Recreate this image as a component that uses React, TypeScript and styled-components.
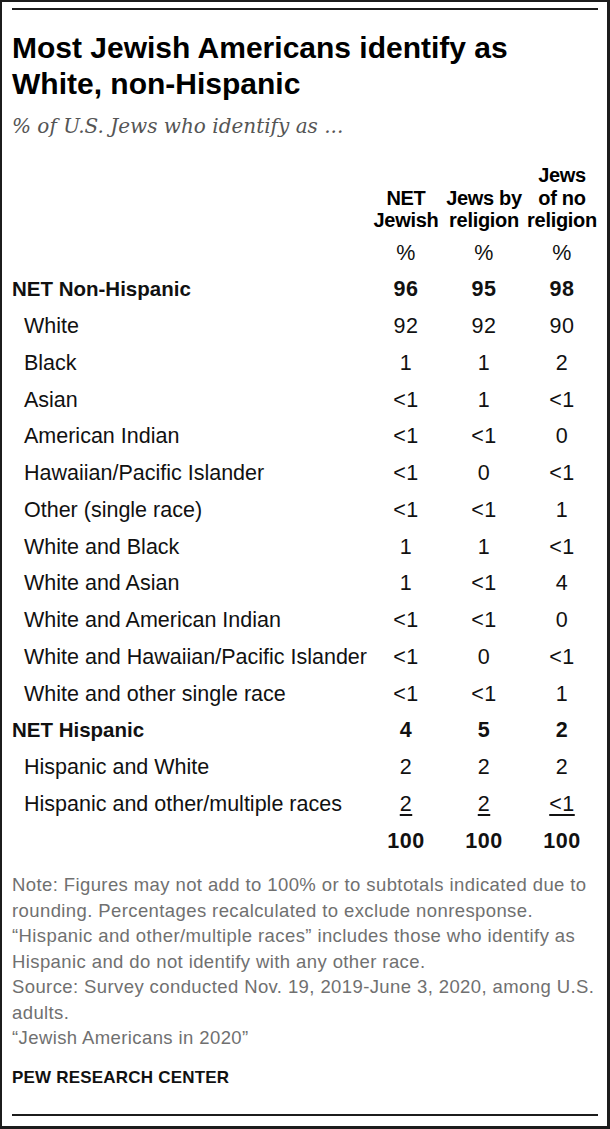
import React from "react";
import styled, { createGlobalStyle } from "styled-components";

type Row = {
  label: string;
  values: string[];
  bold?: boolean;
  underline?: boolean;
};

const rows: Row[] = [
  { label: "NET Non-Hispanic", values: ["96", "95", "98"], bold: true },
  { label: "White", values: ["92", "92", "90"] },
  { label: "Black", values: ["1", "1", "2"] },
  { label: "Asian", values: ["<1", "1", "<1"] },
  { label: "American Indian", values: ["<1", "<1", "0"] },
  { label: "Hawaiian/Pacific Islander", values: ["<1", "0", "<1"] },
  { label: "Other (single race)", values: ["<1", "<1", "1"] },
  { label: "White and Black", values: ["1", "1", "<1"] },
  { label: "White and Asian", values: ["1", "<1", "4"] },
  { label: "White and American Indian", values: ["<1", "<1", "0"] },
  { label: "White and Hawaiian/Pacific Islander", values: ["<1", "0", "<1"] },
  { label: "White and other single race", values: ["<1", "<1", "1"] },
  { label: "NET Hispanic", values: ["4", "5", "2"], bold: true },
  { label: "Hispanic and White", values: ["2", "2", "2"] },
  { label: "Hispanic and other/multiple races", values: ["2", "2", "<1"], underline: true },
  { label: "", values: ["100", "100", "100"], bold: true },
];

const headers = [
  ["NET", "Jewish"],
  ["Jews by", "religion"],
  ["Jews", "of no", "religion"],
];

// note lines break where the published chart breaks them
const notes = [
  "Note: Figures may not add to 100% or to subtotals indicated due to",
  "rounding. Percentages recalculated to exclude nonresponse.",
  "“Hispanic and other/multiple races” includes those who identify as",
  "Hispanic and do not identify with any other race.",
  "Source: Survey conducted Nov. 19, 2019-June 3, 2020, among U.S.",
  "adults.",
  "“Jewish Americans in 2020”",
];

const App = () => {
  return (
    <>
      <GlobalStyle />
      <Frame>
        <Rule />
        <Title>
          Most Jewish Americans identify as
          <br />
          White, non-Hispanic
        </Title>
        <Subtitle>% of U.S. Jews who identify as ...</Subtitle>
        <Table>
          <HeaderRow>
            <span />
            {headers.map((lines) => (
              <HeaderCell key={lines.join(" ")}>
                {lines.map((line) => (
                  <div key={line}>{line}</div>
                ))}
              </HeaderCell>
            ))}
          </HeaderRow>
          <DataRow>
            <span />
            <Value>%</Value>
            <Value>%</Value>
            <Value>%</Value>
          </DataRow>
          {rows.map((row, i) => (
            <DataRow key={i} $bold={row.bold}>
              <Label $indent={!row.bold}>{row.label}</Label>
              {row.values.map((v, j) => (
                <Value key={j} $underline={row.underline}>
                  {v}
                </Value>
              ))}
            </DataRow>
          ))}
        </Table>
        <Notes>
          {notes.map((line) => (
            <NoteLine key={line}>{line}</NoteLine>
          ))}
        </Notes>
        <Credit>PEW RESEARCH CENTER</Credit>
        <BottomRule />
      </Frame>
    </>
  );
};

const GlobalStyle = createGlobalStyle`
  body {
    margin: 0;
    background: #fff;
    font-family: "Liberation Sans", Arial, sans-serif;
  }
`;

const Frame = styled.div`
  width: 610px;
  height: 1129px;
  box-sizing: border-box;
  border-style: solid;
  border-color: #1c1c1c;
  border-width: 2px 3px 3px 2px;
  padding: 6px 9px 10px 10px;
  display: flex;
  flex-direction: column;
  background: #fff;
  color: #000;
`;

const Rule = styled.div`
  height: 2px;
  background: #1c1c1c;
`;

const BottomRule = styled(Rule)`
  margin-top: auto;
`;

const Title = styled.h1`
  margin: 20px 0 0;
  font-size: 30px;
  line-height: 36px;
  font-weight: 700;
  color: #000;
`;

const Subtitle = styled.div`
  margin-top: 12px;
  font-family: "DejaVu Serif", "Liberation Serif", serif;
  font-style: italic;
  font-size: 20px;
  line-height: 24px;
  color: #555;
`;

const Table = styled.div`
  margin-top: 26px;
  margin-right: -3px;
  display: flex;
  flex-direction: column;
`;

const HeaderRow = styled.div`
  display: grid;
  grid-template-columns: minmax(0, 1fr) repeat(3, 78px);
  align-items: end;
  margin-bottom: 3px;
`;

const HeaderCell = styled.div`
  text-align: center;
  font-weight: 700;
  font-size: 20px;
  line-height: 22.5px;
  letter-spacing: -0.3px;
  white-space: nowrap;
`;

const DataRow = styled.div<{ $bold?: boolean }>`
  display: grid;
  grid-template-columns: minmax(0, 1fr) repeat(3, 78px);
  height: 36.75px;
  line-height: 36.75px;
  font-size: 21.5px;
  font-weight: ${(p) => (p.$bold ? 700 : 400)};
  color: #111;
`;

const Label = styled.div<{ $indent?: boolean }>`
  padding-left: ${(p) => (p.$indent ? "12px" : "0")};
  font-size: ${(p) => (p.$indent ? "21.5px" : "20.5px")};
  white-space: nowrap;
`;

const Value = styled.div<{ $underline?: boolean }>`
  text-align: center;
  letter-spacing: 0.5px;
  text-decoration: ${(p) => (p.$underline ? "underline" : "none")};
  text-underline-offset: 3px;
  text-decoration-thickness: 1.5px;
`;

const Notes = styled.div`
  margin-top: 13px;
  font-size: 18.5px;
  line-height: 25.5px;
  letter-spacing: 0.4px;
  color: #707070;
`;

const NoteLine = styled.div`
  white-space: nowrap;
`;

const Credit = styled.div`
  margin-top: 14px;
  font-size: 17px;
  line-height: 25.5px;
  font-weight: 700;
  letter-spacing: 0.2px;
  color: #111;
`;

export default App;
